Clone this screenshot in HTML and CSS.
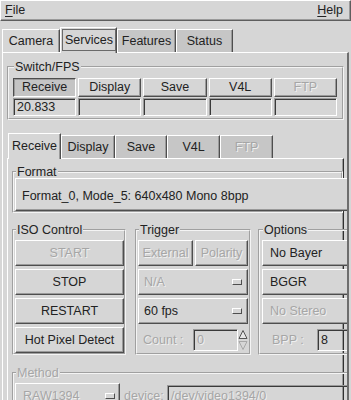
FILE: index.html
```html
<!DOCTYPE html>
<html>
<head>
<meta charset="utf-8">
<link rel="stylesheet" href="styles.css">
</head>
<body>
<div class="menubar"><span><u>F</u>ile</span><span><u>H</u>elp</span></div>
<div class="nb outer">
  <div class="tabs">
    <div class="tab light w-camera">Camera</div>
    <div class="tab sel w-services"><span class="focus">Services</span></div>
    <div class="tab w-features">Features</div>
    <div class="tab w-status">Status</div>
  </div>
  <div class="page outer-page">
    <fieldset class="frame fps">
      <legend>Switch/FPS</legend>
      <div class="fps-grid">
        <div class="btn pressed">Receive</div>
        <div class="btn">Display</div>
        <div class="btn">Save</div>
        <div class="btn">V4L</div>
        <div class="btn off">FTP</div>
        <div class="entry">20.833</div>
        <div class="entry"></div>
        <div class="entry"></div>
        <div class="entry"></div>
        <div class="entry"></div>
      </div>
    </fieldset>
    <div class="nb inner">
      <div class="tabs sub">
        <div class="tab sel w-recv">Receive</div>
        <div class="tab w-disp">Display</div>
        <div class="tab w-save">Save</div>
        <div class="tab w-v4l">V4L</div>
        <div class="tab w-ftp off">FTP</div>
      </div>
      <div class="page inner-page">
        <fieldset class="frame format">
          <legend>Format</legend>
          <div class="raised fmtbox">Format_0, Mode_5: 640x480 Mono 8bpp</div>
        </fieldset>
        <div class="row3">
          <fieldset class="frame iso">
            <legend>ISO Control</legend>
            <div class="col">
              <div class="btn off">START</div>
              <div class="btn">STOP</div>
              <div class="btn">RESTART</div>
              <div class="btn">Hot Pixel Detect</div>
            </div>
          </fieldset>
          <fieldset class="frame trig">
            <legend>Trigger</legend>
            <div class="col">
              <div class="pair">
                <div class="btn off">External</div>
                <div class="btn off">Polarity</div>
              </div>
              <div class="raised optmenu"><span class="off">N/A</span><span class="ind"></span></div>
              <div class="raised optmenu"><span>60 fps</span><span class="ind"></span></div>
              <div class="spinrow">
                <span class="lbl count off">Count :</span>
                <div class="entry spin off">0</div>
                <svg class="arrows" width="10" height="22" viewBox="0 0 10 22">
                  <polygon points="5,1.5 9,9.5 1,9.5" fill="#e6e6e6" stroke="#555"/>
                  <polygon points="1,12.5 9,12.5 5,20.5" fill="#d6d6d6" stroke="#a8a8a8"/>
                </svg>
              </div>
            </div>
          </fieldset>
          <fieldset class="frame opts">
            <legend>Options</legend>
            <div class="col">
              <div class="raised opt">No Bayer</div>
              <div class="raised opt">BGGR</div>
              <div class="raised opt off">No Stereo</div>
              <div class="spinrow">
                <span class="lbl bpp off">BPP :</span>
                <div class="entry bppval">8</div>
              </div>
            </div>
          </fieldset>
        </div>
        <fieldset class="frame method">
          <legend class="off">Method</legend>
          <div class="mrow">
            <div class="raised optmenu raw"><span class="off">RAW1394</span><span class="ind"></span></div>
            <span class="lbl dev off">device:</span>
            <div class="entry devval off">/dev/video1394/0</div>
          </div>
        </fieldset>
      </div>
    </div>
  </div>
</div>
</body>
</html>
```
FILE: styles.css
```css
* { box-sizing: border-box; }
html, body { margin: 0; padding: 0; }
body {
  width: 351px; height: 400px; overflow: hidden;
  background: #d6d6d6;
  font-family: "Liberation Sans", Arial, Helvetica, sans-serif;
  font-size: 12.5px; line-height: 15px; color: #222;
}
u { text-decoration: underline; text-underline-offset: 2px; }

.menubar {
  height: 21px; display: flex; justify-content: space-between; align-items: center;
  padding: 0 7px 0 4px;
  border: 1px solid; border-color: #fff #5e5e5e #5e5e5e #fff;
  box-shadow: inset -1px -1px 0 #9a9a9a;
}

.nb.outer { margin: 6px 2px 0; }
.tabs { display: flex; align-items: flex-end; height: 25px; }
.tabs.sub { padding-left: 1px; }
.tab {
  height: 23px; flex: none;
  display: flex; align-items: center; justify-content: center;
  background: #c6c6c6; white-space: nowrap;
  border-top: 1px solid #fff; border-left: 1px solid #fff; border-right: 1px solid #4e4e4e;
  box-shadow: inset -1px 0 0 #9a9a9a;
}
.tab.light { background: #d6d6d6; }
.tab.sel {
  height: 26px; margin-bottom: -1px; padding-bottom: 1px;
  background: #d6d6d6; position: relative; z-index: 1;
}
.focus {
  flex: 1; align-self: stretch; margin: 1px 0 1px 1px;
  border: 1px solid #6a6a6a;
  display: flex; align-items: center; justify-content: center;
}
.w-camera { width: 58px; }
.w-services { width: 57px; }
.w-features { width: 59px; }
.w-status { width: 57px; }
.w-recv { width: 53px; }
.w-disp { width: 54px; }
.w-save { width: 52px; }
.w-v4l { width: 53px; }
.w-ftp { width: 53px; }

.outer-page {
  height: 348px; overflow: hidden;
  border-top: 1px solid #fff; border-left: 1px solid #fff; border-right: 2px solid #6e6e6e;
  padding: 0 0 0 4px;
}

.frame {
  margin: 0; padding: 0; min-width: 0; min-inline-size: 0;
  border: 2px groove #f4f4f4;
}
.frame > legend { padding: 0 1px; margin-left: 1px; line-height: 12px; height: 12px; }

.frame.fps { margin-top: 8px; width: 337px; padding: 5px 5px 2px 4px; }
.fps-grid {
  display: grid; grid-template-columns: repeat(5, 1fr);
  grid-template-rows: 19px 18px; column-gap: 2px; row-gap: 1px;
}

.btn, .raised {
  background: #d6d6d6;
  border: 1px solid; border-color: #fff #4e4e4e #4e4e4e #fff;
  box-shadow: inset -1px -1px 0 #9a9a9a;
  white-space: nowrap;
}
.btn { display: flex; align-items: center; justify-content: center; }
.btn.pressed {
  background: #c4c4c4;
  border-color: #4e4e4e #fff #fff #4e4e4e;
  box-shadow: inset 1px 1px 0 #9a9a9a;
}
.off { color: #a6a6a6; text-shadow: 1px 1px 0 #f0f0f0; }

.entry {
  display: flex; align-items: center; white-space: nowrap; overflow: hidden;
  border: 1px solid; border-color: #9a9a9a #fff #fff #9a9a9a;
  box-shadow: inset 1px 1px 0 #3a3a3a;
  padding: 1px 0 0 3px;
}

.nb.inner { margin-top: 13px; }
.inner-page {
  width: 337px; height: 260px;
  border-top: 1px solid #fff; border-left: 1px solid #fff; border-right: 1px solid #303030;
  box-shadow: inset -1px 0 0 #9a9a9a;
  padding: 0 0 0 4px;
}

.frame.format { margin-top: 7px; padding: 0 0 0 1px; }
.fmtbox { width: 340px; height: 33px; padding: 10px 0 0 6px; }

.row3 { display: flex; margin-top: 11px; }
.frame.iso { width: 114px; flex: none; padding: 4px 0 0 1px; }
.frame.trig { width: 116px; flex: none; margin-left: 9px; padding: 4px 1px 0 1px; }
.frame.opts { width: 92px; flex: none; margin-left: 7px; padding: 4px 4px 0 2px; }
.col { display: grid; grid-auto-rows: 26px; row-gap: 3px; }
.pair { display: grid; grid-template-columns: 55px 53px; column-gap: 2px; }

.optmenu {
  display: flex; align-items: center; justify-content: space-between;
  padding: 0 5px 0 5px;
}
.ind {
  width: 10px; height: 6px; flex: none;
  background: #d6d6d6;
  border: 1px solid; border-color: #fff #4e4e4e #4e4e4e #fff;
}
.opt { display: flex; align-items: center; padding-left: 7px; }

.spinrow { display: flex; align-items: center; }
.lbl { flex: none; white-space: nowrap; }
.count { width: 55px; padding-left: 5px; }
.spin { width: 45px; height: 22px; }
.arrows { flex: none; display: block; }
.bpp { width: 55px; padding-left: 10px; }
.bppval { width: 40px; height: 22px; flex: none; }

.frame.method { margin-top: 12px; padding: 4px 0 0 1px; width: 340px; }
.mrow { display: flex; align-items: center; }
.raw { width: 105px; height: 26px; flex: none; padding: 0 4px 0 7px; }
.dev { margin-left: 4px; width: 43px; }
.devval { width: 190px; height: 22px; flex: none; }
```
